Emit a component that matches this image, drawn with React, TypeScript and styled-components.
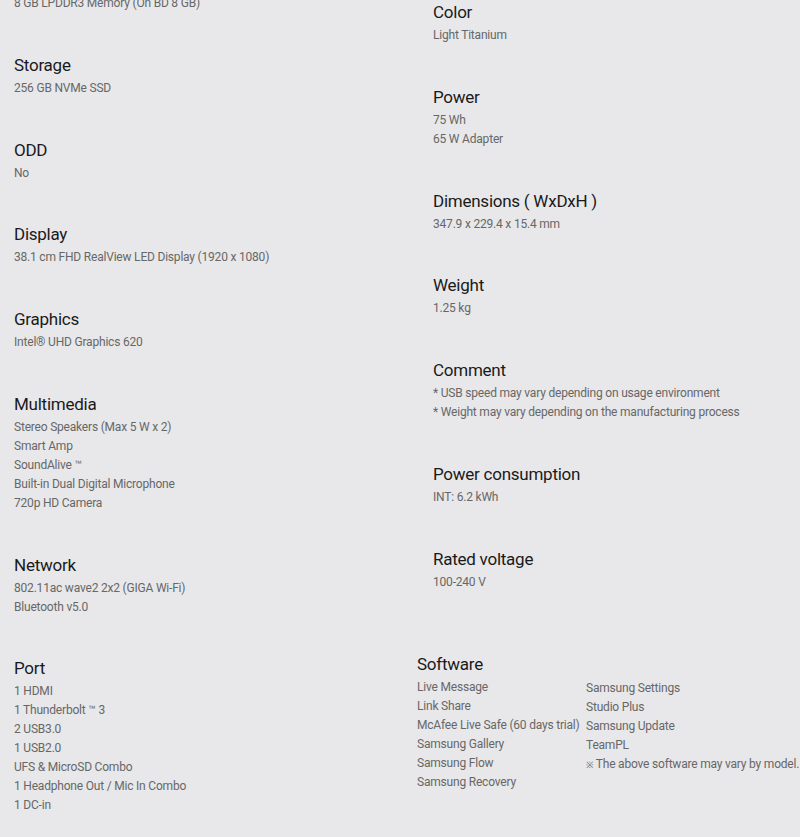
import React from "react";
import styled, { createGlobalStyle } from "styled-components";

const Global = createGlobalStyle`
  html, body { margin: 0; padding: 0; background: #e8e8ea; }
  body { font-family: Roboto, "Liberation Sans", sans-serif; overflow: hidden; }
`;

const Page = styled.div`
  width: 800px;
  height: 837px;
  overflow: hidden;
  background: #e8e8ea;
  padding-left: 14px;
  box-sizing: border-box;
`;

const Columns = styled.div`
  display: grid;
  grid-template-columns: 419px 1fr;
  align-items: start;
`;

const Column = styled.div<{ $offset?: number }>`
  display: flex;
  flex-direction: column;
  gap: 39.75px;
  margin-top: ${(p) => p.$offset ?? 0}px;
`;

const Section = styled.section<{ $shift?: number; $extraTop?: number }>`
  display: flex;
  flex-direction: column;
  margin-left: ${(p) => p.$shift ?? 0}px;
  margin-top: ${(p) => p.$extraTop ?? 0}px;
`;

const Title = styled.h3`
  margin: 0 0 1px;
  font-size: 17px;
  line-height: 25px;
  font-weight: 400;
  letter-spacing: -0.25px;
  color: #1a1a1a;
  white-space: nowrap;
`;

const Value = styled.div`
  font-size: 12px;
  line-height: 19px;
  letter-spacing: -0.2px;
  color: #676767;
  white-space: nowrap;
`;

const Mark = styled.span`
  font-size: 9px;
  margin-right: 2px;
`;

const SoftwareGrid = styled.div`
  display: grid;
  grid-template-columns: 169px 1fr;
`;

const SoftCol = styled.div<{ $down?: number }>`
  display: flex;
  flex-direction: column;
  padding-top: ${(p) => p.$down ?? 0}px;
`;

type Spec = { title: string; values: string[] };

const left: Spec[] = [
  { title: "Memory", values: ["8 GB LPDDR3 Memory (On BD 8 GB)"] },
  { title: "Storage", values: ["256 GB NVMe SSD"] },
  { title: "ODD", values: ["No"] },
  { title: "Display", values: ["38.1 cm FHD RealView LED Display (1920 x 1080)"] },
  { title: "Graphics", values: ["Intel® UHD Graphics 620"] },
  {
    title: "Multimedia",
    values: [
      "Stereo Speakers (Max 5 W x 2)",
      "Smart Amp",
      "SoundAlive ™",
      "Built-in Dual Digital Microphone",
      "720p HD Camera",
    ],
  },
  { title: "Network", values: ["802.11ac wave2 2x2 (GIGA Wi-Fi)", "Bluetooth v5.0"] },
  {
    title: "Port",
    values: [
      "1 HDMI",
      "1 Thunderbolt ™ 3",
      "2 USB3.0",
      "1 USB2.0",
      "UFS & MicroSD Combo",
      "1 Headphone Out / Mic In Combo",
      "1 DC-in",
    ],
  },
];

const right: Spec[] = [
  { title: "Color", values: ["Light Titanium"] },
  { title: "Power", values: ["75 Wh", "65 W Adapter"] },
  { title: "Dimensions ( WxDxH )", values: ["347.9 x 229.4 x 15.4 mm"] },
  { title: "Weight", values: ["1.25 kg"] },
  {
    title: "Comment",
    values: [
      "* USB speed may vary depending on usage environment",
      "* Weight may vary depending on the manufacturing process",
    ],
  },
  { title: "Power consumption", values: ["INT: 6.2 kWh"] },
  { title: "Rated voltage", values: ["100-240 V"] },
];

const softA = [
  "Live Message",
  "Link Share",
  "McAfee Live Safe (60 days trial)",
  "Samsung Gallery",
  "Samsung Flow",
  "Samsung Recovery",
];
const softB = ["Samsung Settings", "Studio Plus", "Samsung Update", "TeamPL"];

const SpecBlock = ({ spec }: { spec: Spec }) => (
  <Section>
    <Title>{spec.title}</Title>
    {spec.values.map((v) => (
      <Value key={v}>{v}</Value>
    ))}
  </Section>
);

export default function App() {
  return (
    <Page>
      <Global />
      <Columns>
        <Column $offset={-32}>
          {left.map((s) => (
            <SpecBlock key={s.title} spec={s} />
          ))}
        </Column>
        <Column $offset={0}>
          {right.map((s) => (
            <SpecBlock key={s.title} spec={s} />
          ))}
          <Section $shift={-16} $extraTop={21}>
            <Title>Software</Title>
            <SoftwareGrid>
              <SoftCol>
                {softA.map((v) => (
                  <Value key={v}>{v}</Value>
                ))}
              </SoftCol>
              <SoftCol $down={1}>
                {softB.map((v) => (
                  <Value key={v}>{v}</Value>
                ))}
                <Value>
                  <Mark>※</Mark>The above software may vary by model.
                </Value>
              </SoftCol>
            </SoftwareGrid>
          </Section>
        </Column>
      </Columns>
    </Page>
  );
}
